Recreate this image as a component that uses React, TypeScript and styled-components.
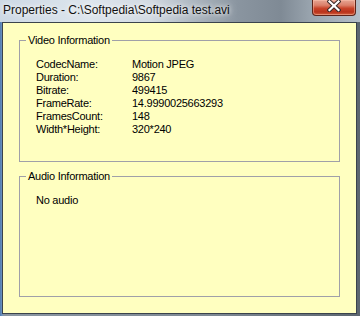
import React from "react";
import styled, { createGlobalStyle } from "styled-components";

const Global = createGlobalStyle`
  html, body { margin: 0; padding: 0; }
  body {
    width: 360px;
    height: 316px;
    overflow: hidden;
    font-family: "Liberation Sans", Arial, sans-serif;
  }
`;

const Window = styled.div`
  width: 360px;
  height: 316px;
  display: flex;
  flex-direction: column;
  background: linear-gradient(90deg, #4f7bb0 0px, #6d93c0 2px, #8a96a2 4px, #7d8893 60%, #5c6670 100%);
`;

const TitleBar = styled.div`
  height: 22px;
  flex: none;
  display: flex;
  align-items: flex-start;
  justify-content: space-between;
  background: linear-gradient(
    90deg,
    #cdd9e5 0%,
    #dde5ed 25%,
    #d2dae2 42%,
    #a9b3bd 55%,
    #8a95a0 66%,
    #7f8a95 78%,
    #98a3ad 86%,
    #b4bec8 100%
  );
`;

const TitleText = styled.div`
  padding: 1px 0 0 3px;
  font-size: 12px;
  line-height: 18px;
  color: #111;
  white-space: nowrap;
  text-shadow: 0 0 4px rgba(255, 255, 255, 0.95), 0 0 8px rgba(255, 255, 255, 0.8);
`;

const CloseButton = styled.div`
  width: 44px;
  height: 16px;
  margin-right: 4px;
  box-sizing: border-box;
  border: 1px solid #5e2419;
  border-top: none;
  border-radius: 0 0 4px 4px;
  display: flex;
  align-items: flex-start;
  justify-content: center;
  background: linear-gradient(
    180deg,
    #e6a593 0%,
    #db806a 35%,
    #c8442a 55%,
    #b9321a 80%,
    #d2613f 100%
  );
  box-shadow: inset 0 0 0 1px rgba(255, 200, 180, 0.45);
`;

const Frame = styled.div`
  flex: 1;
  display: flex;
  padding: 0 3px 2px 2px;
  min-height: 0;
`;

const Client = styled.div`
  flex: 1;
  border: 1px solid #3a434c;
  background: #ffffc0;
  display: flex;
  flex-direction: column;
  gap: 8px;
  padding: 11px 16px 16px 16px;
  min-height: 0;
`;

const GroupBox = styled.fieldset`
  flex: 1;
  margin: 0;
  padding: 0;
  min-width: 0;
  min-height: 0;
  border: 1px solid #a0a0a8;
  font-size: 11px;
  letter-spacing: -0.25px;
  color: #000;
`;

const Legend = styled.legend`
  margin-left: 6px;
  padding: 0 2px;
  line-height: 13px;
  font-size: 11px;
`;

const InfoGrid = styled.div`
  display: grid;
  grid-template-columns: 96px 1fr;
  padding: 11px 16px 0 16px;
  line-height: 13px;
  white-space: nowrap;
`;

const Line = styled.div`
  padding: 11px 16px 0 16px;
  line-height: 13px;
`;

const rows: [string, string][] = [
  ["CodecName:", "Motion JPEG"],
  ["Duration:", "9867"],
  ["Bitrate:", "499415"],
  ["FrameRate:", "14.9990025663293"],
  ["FramesCount:", "148"],
  ["Width*Height:", "320*240"],
];

export default function App() {
  return (
    <>
      <Global />
      <Window>
        <TitleBar>
          <TitleText>Properties - C:\Softpedia\Softpedia test.avi</TitleText>
          <CloseButton>
            <svg width="14" height="12" viewBox="0 0 14 12">
              <path d="M2.5 1.5 L11.5 10 M11.5 1.5 L2.5 10" stroke="#3a2a28" strokeWidth="4.2" strokeLinecap="square" />
              <path d="M2.5 1.5 L11.5 10 M11.5 1.5 L2.5 10" stroke="#ffffff" strokeWidth="2.2" strokeLinecap="square" />
            </svg>
          </CloseButton>
        </TitleBar>
        <Frame>
          <Client>
            <GroupBox>
              <Legend>Video Information</Legend>
              <InfoGrid>
                {rows.map(([k, v]) => (
                  <React.Fragment key={k}>
                    <span>{k}</span>
                    <span>{v}</span>
                  </React.Fragment>
                ))}
              </InfoGrid>
            </GroupBox>
            <GroupBox>
              <Legend>Audio Information</Legend>
              <Line>No audio</Line>
            </GroupBox>
          </Client>
        </Frame>
      </Window>
    </>
  );
}
